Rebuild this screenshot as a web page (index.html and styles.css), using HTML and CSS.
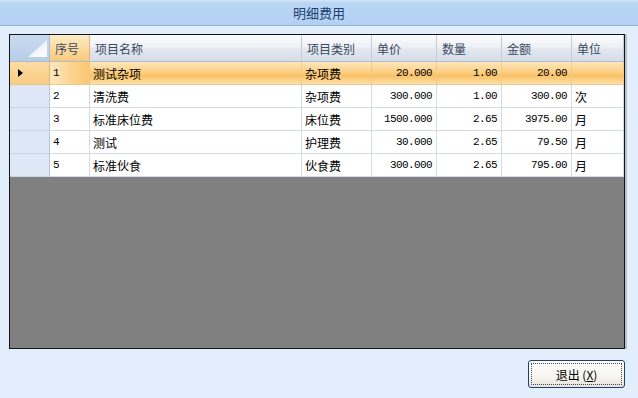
FILE: index.html
```html
<!DOCTYPE html>
<html lang="zh">
<head>
    <meta charset="UTF-8">
    <title>明细费用</title>
    <link rel="stylesheet" href="styles.css">
</head>
<body>

    <!-- Judul -->
    <div class="title-bar">明细费用</div>

    <div class="grid-box">
        <table class="grid">
            <colgroup>
                <col class="c-rowhead">
                <col class="c-no">
                <col class="c-name">
                <col class="c-type">
                <col class="c-price">
                <col class="c-qty">
                <col class="c-amount">
                <col class="c-unit">
            </colgroup>
            <thead>
                <tr>
                    <th class="corner">
                        <svg width="39" height="26" viewBox="0 0 39 26">
                            <defs>
                                <linearGradient id="tri" x1="0" y1="0" x2="1" y2="1">
                                    <stop offset="0" stop-color="#dfe9f6"/>
                                    <stop offset="1" stop-color="#ffffff"/>
                                </linearGradient>
                            </defs>
                            <polygon points="37,5 37,22 18,22" fill="url(#tri)"/>
                        </svg>
                    </th>
                    <th class="active-col">序号</th>
                    <th>项目名称</th>
                    <th>项目类别</th>
                    <th>单价</th>
                    <th>数量</th>
                    <th>金额</th>
                    <th>单位</th>
                </tr>
            </thead>
            <tbody>
                <tr class="selected">
                    <td class="rowhead"><span class="marker"></span></td>
                    <td class="num-l current">1</td>
                    <td>测试杂项</td>
                    <td>杂项费</td>
                    <td class="num">20.000</td>
                    <td class="num">1.00</td>
                    <td class="num">20.00</td>
                    <td></td>
                </tr>
                <tr>
                    <td class="rowhead"></td>
                    <td class="num-l">2</td>
                    <td>清洗费</td>
                    <td>杂项费</td>
                    <td class="num">300.000</td>
                    <td class="num">1.00</td>
                    <td class="num">300.00</td>
                    <td>次</td>
                </tr>
                <tr>
                    <td class="rowhead"></td>
                    <td class="num-l">3</td>
                    <td>标准床位费</td>
                    <td>床位费</td>
                    <td class="num">1500.000</td>
                    <td class="num">2.65</td>
                    <td class="num">3975.00</td>
                    <td>月</td>
                </tr>
                <tr>
                    <td class="rowhead"></td>
                    <td class="num-l">4</td>
                    <td>测试</td>
                    <td>护理费</td>
                    <td class="num">30.000</td>
                    <td class="num">2.65</td>
                    <td class="num">79.50</td>
                    <td>月</td>
                </tr>
                <tr>
                    <td class="rowhead"></td>
                    <td class="num-l">5</td>
                    <td>标准伙食</td>
                    <td>伙食费</td>
                    <td class="num">300.000</td>
                    <td class="num">2.65</td>
                    <td class="num">795.00</td>
                    <td>月</td>
                </tr>
            </tbody>
        </table>
    </div>

    <div class="actions">
        <button class="btn-exit"><span class="focus">退出 (<u>X</u>)</span></button>
    </div>

</body>
</html>
```

FILE: styles.css
```css
/* Dasar */
* {
    margin: 0;
    padding: 0;
    box-sizing: border-box;
}

body {
    width: 638px;
    height: 398px;
    overflow: hidden;
    background: #e3eefd;
    font-family: "Noto Sans CJK SC", "Liberation Sans", sans-serif;
    font-size: 12px;
    color: #000;
}

.title-bar {
    height: 26px;
    line-height: 25px;
    text-align: center;
    font-size: 13px;
    color: #1d3f73;
    background: linear-gradient(#d3e5f9 0, #bad6f4 3px, #b3d0f2 100%);
    border-bottom: 1px solid #8eb2de;
}

/* Kotak tabel */
.grid-box {
    margin: 8px 0 0 9px;
    width: 616px;
    height: 315px;
    border: 1px solid #141414;
    background: #808080;
    box-shadow: 2px 0 0 #b9c4d2;
}

.grid {
    width: 614px;
    table-layout: fixed;
    border-collapse: separate;
    border-spacing: 0;
}

.c-rowhead { width: 40px; }
.c-no { width: 40px; }
.c-name { width: 212px; }
.c-type { width: 70px; }
.c-price { width: 65px; }
.c-qty { width: 65px; }
.c-amount { width: 70px; }
.c-unit { width: 52px; }

.grid th {
    height: 27px;
    padding: 0 0 0 5px;
    text-align: left;
    font-weight: normal;
    color: #3b4a5e;
    background: linear-gradient(#fbfcfe, #eef1f6 45%, #e2e7ef 55%, #d7dee8);
    border-right: 1px solid #c3ccd8;
    border-bottom: 1px solid #aebccf;
    white-space: nowrap;
}

.grid th.corner {
    padding: 0;
    background: linear-gradient(#c9daf0, #b9cde8);
    border-right: 1px solid #a9bcd6;
}

.grid th.corner svg {
    display: block;
}

.grid th.active-col {
    background: linear-gradient(#fdebc8, #fbdba2 50%, #f8c97c);
    border-right: 1px solid #e2b56a;
}

.grid td {
    height: 23px;
    padding: 0 3px;
    background: #fff;
    border-right: 1px solid #d5dbe6;
    border-bottom: 1px solid #d5dbe6;
    white-space: nowrap;
    overflow: hidden;
}

.grid td.rowhead {
    background: #dde7f5;
    border-right: 1px solid #b8c6da;
    border-bottom: 1px solid #c9d4e4;
}

.grid td.num,
.grid td.num-l {
    font-family: "Liberation Mono", "DejaVu Sans Mono", monospace;
    font-size: 11px;
    letter-spacing: -0.6px;
}

.grid td.num {
    text-align: right;
    padding-right: 4px;
}

/* Baris terpilih */
.grid tr.selected td {
    background: linear-gradient(#fde7bd, #fbcd7f 50%, #f9c062 60%, #fde0a9);
    border-right-color: #f2c985;
    border-bottom-color: #eec78a;
}

.grid tr.selected td.current {
    background: linear-gradient(90deg, #fde8c2, #fbd28a 60%, #fac772);
}

.grid tr.selected td.rowhead {
    background: linear-gradient(#fcdca4, #f9cc83);
    border-right-color: #e2b56a;
}

.marker {
    display: block;
    margin-left: 5px;
    width: 0;
    height: 0;
    border-top: 4px solid transparent;
    border-bottom: 4px solid transparent;
    border-left: 5px solid #000;
}

/* Tombol */
.actions {
    display: flex;
    justify-content: flex-end;
    padding: 11px 13px 0 0;
}

.btn-exit {
    width: 97px;
    height: 28px;
    padding: 2px;
    border: 1px solid #1f3e78;
    border-radius: 3px;
    background: linear-gradient(#ffffff, #f6f5f0 60%, #e6e3da);
    font-family: "Noto Sans CJK SC", "Liberation Sans", sans-serif;
    font-size: 12px;
    color: #000;
    cursor: pointer;
}

.btn-exit .focus {
    display: flex;
    align-items: center;
    justify-content: center;
    height: 100%;
    border: 1px dotted #4a4a4a;
}
```
